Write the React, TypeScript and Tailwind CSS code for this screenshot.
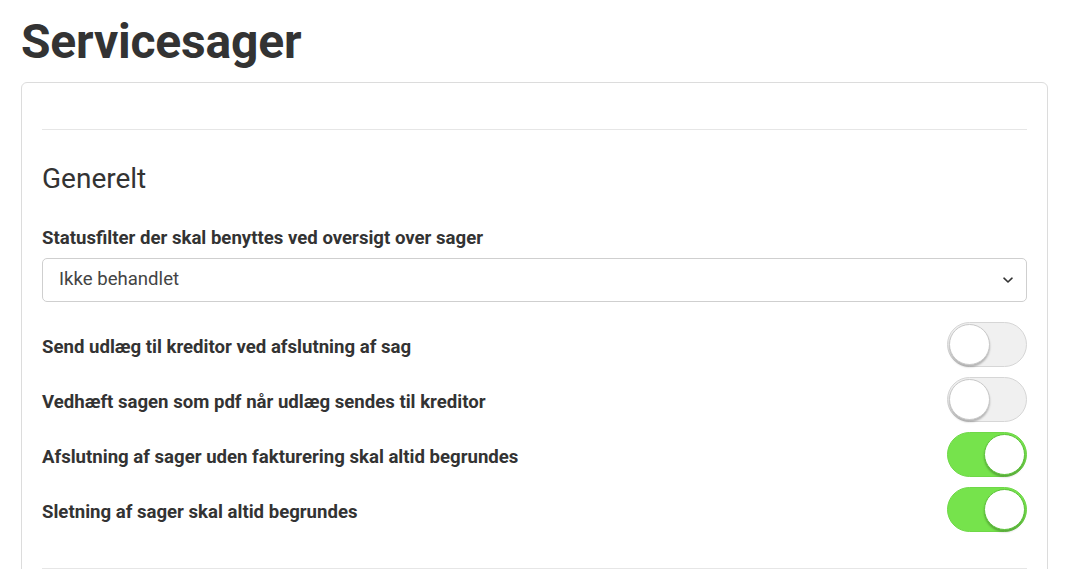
import React from "react";

function Toggle({ on }: { on: boolean }) {
  return (
    <div
      className={
        on
          ? "relative h-[45px] w-[80px] shrink-0 rounded-full border border-[#6fd848] bg-[#76e34c]"
          : "relative h-[45px] w-[80px] shrink-0 rounded-full border border-[#d6d6d6] bg-[#f0f0f0]"
      }
    >
      <div
        className={
          on
            ? "absolute right-[1px] top-[1px] h-[41px] w-[41px] rounded-full border border-[#5cc33a] bg-white shadow-[0_2px_2px_rgba(0,0,0,0.25)]"
            : "absolute left-[1px] top-[1px] h-[41px] w-[41px] rounded-full border border-[#c9c9c9] bg-white shadow-[0_2px_2px_rgba(0,0,0,0.25)]"
        }
      />
    </div>
  );
}

const rows: { label: string; on: boolean }[] = [
  { label: "Send udlæg til kreditor ved afslutning af sag", on: false },
  { label: "Vedhæft sagen som pdf når udlæg sendes til kreditor", on: false },
  { label: "Afslutning af sager uden fakturering skal altid begrundes", on: true },
  { label: "Sletning af sager skal altid begrundes", on: true },
];

export default function App() {
  return (
    <div
      className="min-h-screen bg-white px-[21px] text-[#333333]"
      style={{ fontFamily: "Roboto, 'Liberation Sans', sans-serif" }}
    >
      <h1 className="pt-[14px] text-[48px] font-bold leading-[56px] tracking-[-0.2px]">Servicesager</h1>
      <div className="mt-[12px] w-[1027px] rounded-[6px] border border-[#dcdcdc] px-[20px] pt-[46px]">
        <hr className="border-t border-[#e6e6e6]" />
        <h3 className="mt-[32px] text-[28px] font-normal leading-[34px]">Generelt</h3>
        <label className="mt-[30px] block text-[18.6px] font-bold leading-[24px]">
          Statusfilter der skal benyttes ved oversigt over sager
        </label>
        <div className="mt-[8px] flex h-[44px] items-center justify-between rounded-[5px] border border-[#cfcfcf] bg-white pl-[16px] pr-[12px] text-[18.6px] text-[#444]">
          <span>Ikke behandlet</span>
          <svg width="12" height="12" viewBox="0 0 12 12" fill="none">
            <path d="M2 4.2 L6 8 L10 4.2" stroke="#333" strokeWidth="1.6" strokeLinecap="round" strokeLinejoin="round" />
          </svg>
        </div>
        <div className="mt-[20px] flex flex-col gap-[10px]">
          {rows.map((r) => (
            <div key={r.label} className="flex items-center justify-between">
              <span className="pt-[5px] text-[18.6px] font-bold leading-[24px]">{r.label}</span>
              <Toggle on={r.on} />
            </div>
          ))}
        </div>
        <hr className="mt-[36px] border-t border-[#e6e6e6]" />
        <div className="h-[40px]" />
      </div>
    </div>
  );
}
